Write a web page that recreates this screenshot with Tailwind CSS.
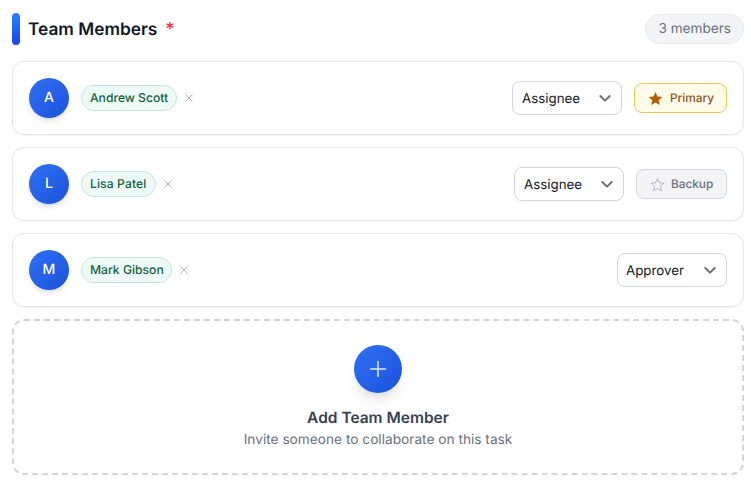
<!DOCTYPE html>
<html lang="en">
<head>
    <meta charset="UTF-8">
    <meta name="viewport" content="width=device-width, initial-scale=1.0">
    <title>Team Members</title>
    <script src="https://cdn.jsdelivr.net/npm/@tailwindcss/browser@4"></script>
</head>
<body class="bg-white font-['Inter',sans-serif] [text-rendering:geometricPrecision] overflow-hidden">
    <div class="w-[751px] h-[481px] pl-3 pr-[7px] pt-[13px]">
        <!-- header -->
        <div class="flex items-center justify-between h-8 mb-4">
            <div class="flex items-center">
                <div class="w-2 h-8 rounded bg-gradient-to-b from-blue-500 to-blue-700"></div>
                <span class="ml-2 pt-0.5 text-[17.3px] font-semibold text-gray-900">Team Members</span>
                <span class="ml-2 pt-0.5 text-lg font-medium text-red-500">*</span>
            </div>
            <span class="flex items-center h-[30px] px-3 rounded-full border border-gray-200 bg-gray-100 text-[13.6px] text-gray-500">3 members</span>
        </div>

        <div class="flex flex-col gap-3">
            <!-- Andrew -->
            <div class="flex items-center justify-between h-[74px] px-4 rounded-xl border border-gray-200 bg-white shadow-[0_1px_2px_rgba(0,0,0,0.05)]">
                <div class="flex items-center gap-3">
                    <div class="flex items-center justify-center w-10 h-10 rounded-full bg-gradient-to-br from-[#2f6ff2] to-[#1d53dc] text-sm font-medium text-white shadow-md">A</div>
                    <div class="flex items-center gap-[7px]">
                        <span class="flex items-center w-[96px] h-[26px] px-2 rounded-full border border-[#c3e8d8] bg-[#eefaf5] text-[12.15px] font-medium text-[#14633f] whitespace-nowrap">Andrew Scott</span>
                        <svg class="w-2.5 h-2.5 text-gray-400" viewBox="0 0 10 10" fill="none" stroke="currentColor" stroke-width="0.8"><path d="M1.5 1.5l7 7M8.5 1.5l-7 7"/></svg>
                    </div>
                </div>
                <div class="flex items-center gap-3">
                    <div class="flex items-center justify-between w-[110px] h-[34px] pl-[9px] pr-2 rounded-lg border border-gray-300 bg-white text-[13.33px] text-gray-900">
                        <span class="pt-[3px]">Assignee</span>
                        <svg class="w-4 h-4 text-gray-500" viewBox="0 0 24 24" fill="none" stroke="currentColor" stroke-width="3" stroke-linecap="round" stroke-linejoin="round"><path d="M5 9l7 7 7-7"/></svg>
                    </div>
                    <div class="flex items-center gap-[7px] w-[93px] h-[30px] pl-[13px] rounded-lg border border-[#eec94f] bg-[#fefce8] text-[11.8px] font-medium text-[#8a5320]">
                        <svg class="w-[15px] h-[15px] text-[#b45f06]" viewBox="0 0 24 24" fill="currentColor"><path d="M12 1.5l3.2 7.2 7.8.8-5.9 5.2 1.8 7.8L12 18.4l-6.9 4.1 1.8-7.8L1 9.5l7.8-.8z"/></svg>
                        <span class="pt-0.5">Primary</span>
                    </div>
                </div>
            </div>

            <!-- Lisa -->
            <div class="flex items-center justify-between h-[74px] px-4 rounded-xl border border-gray-200 bg-white shadow-[0_1px_2px_rgba(0,0,0,0.05)]">
                <div class="flex items-center gap-3">
                    <div class="flex items-center justify-center w-10 h-10 rounded-full bg-gradient-to-br from-[#2f6ff2] to-[#1d53dc] text-sm font-medium text-white shadow-md">L</div>
                    <div class="flex items-center gap-[7px]">
                        <span class="flex items-center w-[75px] h-[26px] px-2 rounded-full border border-[#c3e8d8] bg-[#eefaf5] text-[12.15px] tracking-[0.1px] font-medium text-[#14633f] whitespace-nowrap">Lisa Patel</span>
                        <svg class="w-2.5 h-2.5 text-gray-400" viewBox="0 0 10 10" fill="none" stroke="currentColor" stroke-width="0.8"><path d="M1.5 1.5l7 7M8.5 1.5l-7 7"/></svg>
                    </div>
                </div>
                <div class="flex items-center gap-3">
                    <div class="flex items-center justify-between w-[110px] h-[34px] pl-[9px] pr-2 rounded-lg border border-gray-300 bg-white text-[13.33px] text-gray-900">
                        <span class="pt-[3px]">Assignee</span>
                        <svg class="w-4 h-4 text-gray-500" viewBox="0 0 24 24" fill="none" stroke="currentColor" stroke-width="3" stroke-linecap="round" stroke-linejoin="round"><path d="M5 9l7 7 7-7"/></svg>
                    </div>
                    <div class="flex items-center gap-[6px] w-[91px] h-[30px] pl-[13px] rounded-lg border border-gray-300 bg-gray-100 text-[11.8px] font-medium text-gray-500">
                        <svg class="w-[15px] h-[15px] text-gray-400" viewBox="0 0 24 24" fill="none" stroke="currentColor" stroke-width="1.2" stroke-linejoin="round"><path d="M12 2.5l3 6.7 7.2.8-5.4 4.8 1.6 7.2-6.4-3.7-6.4 3.7 1.6-7.2L1.8 10 9 9.2z"/></svg>
                        <span class="pt-0.5">Backup</span>
                    </div>
                </div>
            </div>

            <!-- Mark -->
            <div class="flex items-center justify-between h-[74px] px-4 rounded-xl border border-gray-200 bg-white shadow-[0_1px_2px_rgba(0,0,0,0.05)]">
                <div class="flex items-center gap-3">
                    <div class="flex items-center justify-center w-10 h-10 rounded-full bg-gradient-to-br from-[#2f6ff2] to-[#1d53dc] text-sm font-medium text-white shadow-md">M</div>
                    <div class="flex items-center gap-[7px]">
                        <span class="flex items-center w-[91px] h-[26px] px-2 rounded-full border border-[#c3e8d8] bg-[#eefaf5] text-[12.15px] font-medium text-[#14633f] whitespace-nowrap">Mark Gibson</span>
                        <svg class="w-2.5 h-2.5 text-gray-400" viewBox="0 0 10 10" fill="none" stroke="currentColor" stroke-width="0.8"><path d="M1.5 1.5l7 7M8.5 1.5l-7 7"/></svg>
                    </div>
                </div>
                <div class="flex items-center justify-between w-[110px] h-[34px] pl-2 pr-2 rounded-lg border border-gray-300 bg-white text-[13.33px] text-gray-900">
                    <span class="pt-[3px]">Approver</span>
                    <svg class="w-4 h-4 text-gray-500" viewBox="0 0 24 24" fill="none" stroke="currentColor" stroke-width="3" stroke-linecap="round" stroke-linejoin="round"><path d="M5 9l7 7 7-7"/></svg>
                </div>
            </div>

            <!-- add member -->
            <div class="flex flex-col items-center h-[156px] pt-6 rounded-xl border-2 border-dashed border-gray-300 bg-white">
                <div class="flex items-center justify-center w-12 h-12 rounded-full bg-gradient-to-br from-[#2f6ff2] to-[#1d53dc] shadow-lg">
                    <svg class="w-5 h-5 text-blue-100" viewBox="0 0 20 20" fill="none" stroke="currentColor" stroke-width="1.5" stroke-linecap="round"><path d="M10 2.5v15M2.5 10h15"/></svg>
                </div>
                <div class="mt-[13px] text-[15.5px] leading-6 font-semibold text-gray-700">Add Team Member</div>
                <div class="text-[13.7px] leading-5 text-gray-500">Invite someone to collaborate on this task</div>
            </div>
        </div>
    </div>
</body>
</html>
